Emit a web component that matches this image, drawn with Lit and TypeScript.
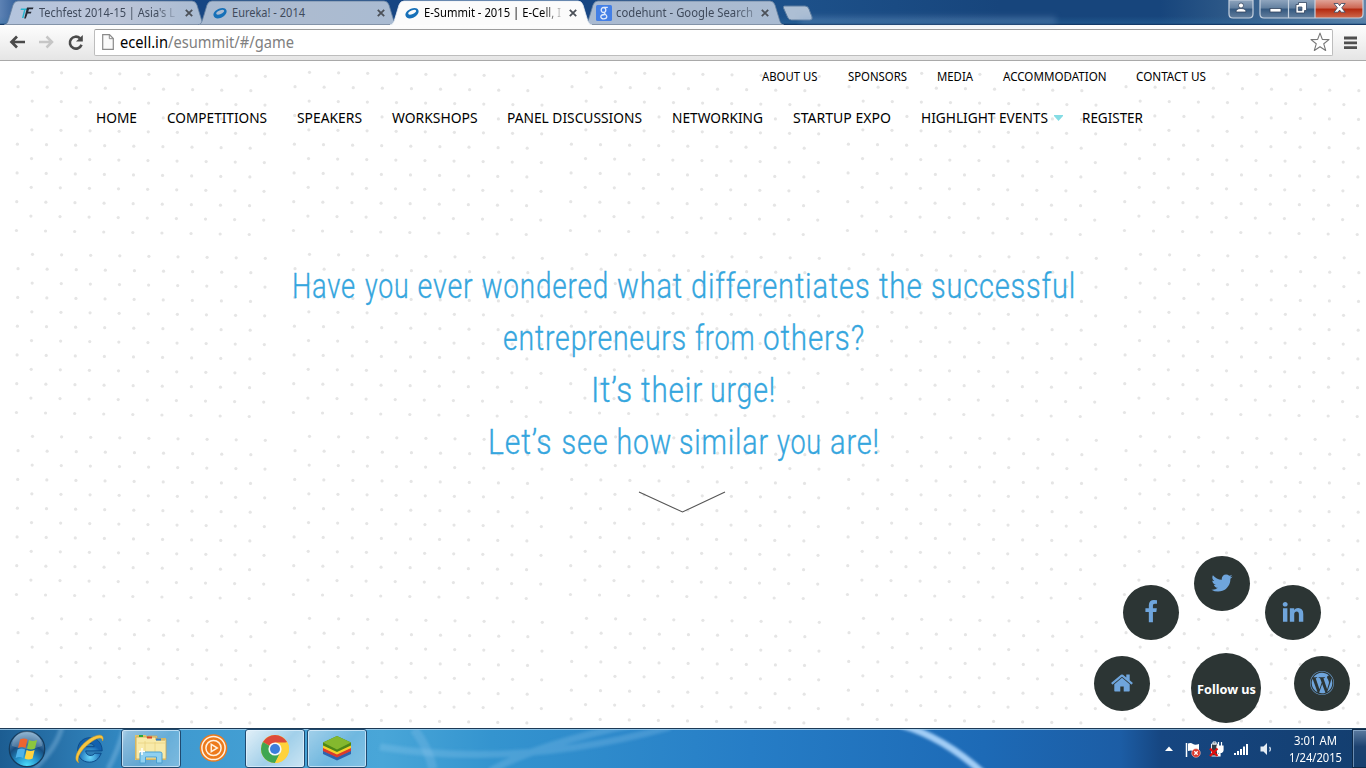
import { LitElement, html, svg, css } from "lit";
import { customElement } from "lit/decorators.js";

/** A line of text set to an exact advance width. */
const line = (
  text: string,
  width: number,
  size: number,
  height: number,
  base: number,
  cls = ""
) => html`<svg class="line ${cls}" width=${width} height=${height}>
  <text x="0" y=${base} font-size=${size} textLength=${width} lengthAdjust="spacingAndGlyphs">${text}</text>
</svg>`;

interface Tab { title: string; w: number; textW: number; icon: string; active?: boolean; pad: number; end: number; fade: string; }

const tabs: Tab[] = [
  { title: "Techfest 2014-15 | Asia's L", w: 202, textW: 136, icon: "tf", pad: 15, end: 13, fade: "fade" },
  { title: "Eureka! - 2014", w: 200, textW: 73, icon: "ring", pad: 14, end: 13, fade: "" },
  { title: "E-Summit - 2015 | E-Cell, I", w: 202, textW: 137, icon: "ring", active: true, pad: 14, end: 15, fade: "fade" },
  { title: "codehunt - Google Search", w: 200, textW: 137, icon: "goog", pad: 12, end: 15, fade: "fadeS" },
];

const topNav: [string, number][] = [
  ["ABOUT US", 55.5], ["SPONSORS", 59], ["MEDIA", 36], ["ACCOMMODATION", 103.5], ["CONTACT US", 70],
];
const mainNav: [string, number][] = [
  ["HOME", 41], ["COMPETITIONS", 100], ["SPEAKERS", 65], ["WORKSHOPS", 85.5], ["PANEL DISCUSSIONS", 135],
  ["NETWORKING", 91], ["STARTUP EXPO", 98], ["HIGHLIGHT EVENTS", 127], ["REGISTER", 61],
];

// Each headline line: total width, then its words as [text, offset, width].
const headline: { width: number; words: [string, number, number][] }[] = [
  { width: 783, words: [["Have", 0, 64], ["you", 73, 44.5], ["ever", 125.5, 56], ["wondered", 189.5, 127.5], ["what", 325, 66], ["differentiates", 399, 179.5], ["the", 587, 43.5], ["successful", 639, 145]] },
  { width: 361, words: [["entrepreneurs", 0, 184], ["from", 192, 60.5], ["others?", 260, 102]] },
  { width: 184, words: [["It’s", 0, 42], ["their", 50, 62], ["urge!", 119, 66] ] },
  { width: 391, words: [["Let’s", 0, 64.5], ["see", 73.5, 47], ["how", 128.5, 55.5], ["similar", 191, 90], ["you", 289, 45], ["are!", 342, 50]] },
];

const P = {
  twitter: "M1684 408q-67 98-162 167 1 14 1 42 0 130-38 259.5t-115.5 248.5-184.5 210.5-258 146-323 54.5q-271 0-496-145 35 4 78 4 225 0 401-138-105-2-188-64.5t-114-159.5q33 5 61 5 43 0 85-11-112-23-185.5-111.5t-73.5-205.5v-4q68 38 146 41-66-44-105-115t-39-154q0-88 44-163 121 149 294.5 238.5t371.5 99.5q-8-38-8-74 0-134 94.5-228.5t228.5-94.5q140 0 236 102 109-21 205-78-37 115-142 178 93-10 186-50z",
  facebook: "M1343 12v264h-157q-86 0-116 36t-30 108v189h293l-39 296h-254v759h-306v-759h-255v-296h255v-218q0-186 104-288.5t277-102.5q147 0 228 12z",
  linkedin: "M477 625v991h-330v-991h330zm21-306q1 73-50.5 122t-135.5 49h-2q-82 0-132-49t-50-122q0-74 51.5-122.5t134.5-48.5 133 48.5 51 122.5zm1166 729v568h-329v-530q0-105-40.5-164.5t-126.5-59.5q-63 0-105.5 34.5t-63.5 85.5q-11 30-11 81v553h-329q2-399 2-647t-1-296l-1-48h329v144h-2q20-32 41-56t56.5-52 87-43.5 114.5-15.5q171 0 275 113.5t104 332.5z",
  home: "M1472 992v480q0 26-19 45t-45 19h-384v-384h-256v384h-384q-26 0-45-19t-19-45v-480q0-1 .5-3t.5-3l575-474 575 474q1 2 1 6zm223-69l-62 74q-8 9-21 11h-3q-13 0-21-7l-692-577-692 577q-12 8-24 7-13-2-21-11l-62-74q-8-10-7-23.5t11-21.5l719-599q32-26 76-26t76 26l244 204v-195q0-14 9-23t23-9h192q14 0 23 9t9 23v408l219 182q10 8 11 21.5t-7 23.5z",
  wordpress: "M127 896q0-163 67-313l367 1005q-196-95-315-281t-119-411zm1288-39q0 19-2.5 38.5t-10 49.5-11.5 44-17.5 59-17.5 58l-76 256-278-826q46-3 88-8 19-2 26-18.5t-2.5-31-28.5-13.5l-205 10q-75-1-202-10-12-1-20.5 5t-11.5 15-1.5 18.5 9 16.5 19.5 8l80 8 120 328-168 504-280-832q46-3 88-8 19-2 26-18.5t-2.5-31-28.5-13.5l-205 10q-7 0-23-.5t-26-.5q105-160 274.5-253.5t367.5-93.5q147 0 280.5 53t238.5 149h-10q-55 0-92 40.5t-37 95.5q0 12 2 24t4 21.5 8 23 9 21 12 22.5 12.5 21 14.5 24 14 23q63 107 63 212zm-506 106l237 647q1 6 5 11-126 44-255 44-112 0-217-32zm661-436q95 174 95 369 0 209-104 385.5t-279 278.5l235-678q59-169 59-276 0-42-6-79zm-674-527q182 0 348 71t286 191 191 286 71 348-71 348-191 286-286 191-348 71-348-71-286-191-191-286-71-348 71-348 191-286 286-191 348-71zm0 1751q173 0 331.5-68t273-182.5 182.5-273 68-331.5-68-331.5-182.5-273-273-182.5-331.5-68-331.5 68-273 182.5-182.5 273-68 331.5 68 331.5 182.5 273 273 182.5 331.5 68z",
};

// The tile repeats every 277 x 182 px: twelve slightly rotated rows of nine dots.
const dots = Array.from({ length: 12 * 9 }, (_, i) => {
  const r = Math.floor(i / 9), c = i % 9;
  return svg`<circle cx=${(r % 2 ? 18.2 : 32.5) - r * 0.16 + c * 29.1} cy=${11.3 + r * 14.38 + c * 0.5} r="1.6"/>`;
});

@customElement("app-root")
export class AppRoot extends LitElement {
  static styles = css`
    :host { display: flex; flex-direction: column; width: 1366px; height: 768px; overflow: hidden; background: #fff; }
    :host, text { font-family: 'Noto Sans', 'Open Sans', sans-serif; }
    svg { display: block; flex: none; }
    .line { overflow: visible; }
    .titlebar { position: relative; display: flex; height: 25px; padding-left: 4px; box-sizing: border-box; flex: none;
      background: linear-gradient(180deg, transparent 65%, rgba(50,115,165,.35) 93%, #143a68 97%), linear-gradient(90deg, #5d82b4 0, #3a659d 15px, #174683 190px, #174683 600px, #1d518a 790px, #17457c 1000px, #17457c 1160px, #315c8a 1240px, #6486aa 1366px); }
    .glow { position: absolute; left: 800px; top: 17px; width: 256px; height: 7px; background: rgba(130,165,205,.33); filter: blur(3px); }
    .tab { position: relative; display: flex; height: 25px; align-items: center; margin-right: -8px; box-sizing: border-box; color: #3f4a5c; }
    .tab.active { z-index: 2; color: #000; }
    .tab > .shape { position: absolute; left: 0; top: 0; }
    .tab > .fav, .tab > .line, .tab > .x { position: relative; }
    .tab .line { margin-left: 4px; fill: currentColor; }
    .tab .fade { -webkit-mask-image: linear-gradient(90deg,#000 86%,rgba(0,0,0,.18) 100%); }
    .tab .fadeS { -webkit-mask-image: linear-gradient(90deg,#000 86%,rgba(0,0,0,.45) 100%); }
    .space { flex: 1; }
    .newtab { margin: 5px 0 0 6px; }
    .winbtns { position: absolute; left: 1228px; top: 0; }
    .toolbar { display: flex; align-items: center; height: 36px; box-sizing: border-box; flex: none; padding: 0 9px 1px 9px; background: linear-gradient(#fdfdfd, #f2f2f2 50%, #e5e5e5); border-bottom: 1px solid #a9a9a9; }
    .omni { display: flex; align-items: center; width: 1240px; height: 27px; box-sizing: border-box; margin-left: 8px; padding: 0 2px 0 7px; border: 1px solid #bdbdbd; border-top-color: #9c9c9c; border-radius: 2px; background: #fff; }
    .omni .url { margin-left: 6px; fill: #000; }
    .omni .path { fill: #808080; }
    .nav3 { margin-left: 10px; }
    .menu { margin-left: 11px; }
    .page { position: relative; flex: 1; display: flex; flex-direction: column; }
    .dots { position: absolute; inset: 0; fill: #e5e5e5; }
    .top, .main { position: relative; display: flex; gap: 30px; fill: #000; }
    .top { padding: 7px 0 0 762px; height: 18px; }
    .main { padding: 22px 0 0 95.5px; }
    .hl { display: flex; gap: 6px; margin-right: -11px; align-items: center; }
    .hero { position: relative; display: flex; flex-direction: column; align-items: center; padding-top: 131px; fill: #35a6de; }
    .hero text { font-family: Roboto, 'Open Sans', sans-serif; font-weight: 300; letter-spacing: 1px; stroke: #35a6de; stroke-width: .35px; }
    .chev { margin: 24px 2px 0 0; }
    .bubble { position: absolute; display: flex; align-items: center; justify-content: center; width: 56px; height: 55px; border-radius: 50%; background: #2c3534; fill: #6fa5dc; box-sizing: border-box; padding-bottom: 1px; }
    .tw { left: 1194px; top: 495px; }
    .fb { left: 1123px; top: 524px; }
    .li { left: 1264.5px; top: 524px; }
    .ho { left: 1094px; top: 595px; }
    .wp { left: 1294px; top: 595px; }
    .fo { left: 1191px; top: 592px; width: 70px; height: 70px; fill: #fff; padding: 2px 0 0; }
    .fo text { font-weight: 700; }
    .taskbar { position: relative; display: flex; flex: none; height: 40px; box-sizing: border-box; border-top: 1px solid #1d3a56; }
    .taskbar .wall { position: absolute; left: 0; top: 0; }
    .apps { position: relative; display: flex; align-items: center; padding-left: 5px; }
    .app { display: flex; align-items: center; justify-content: center; width: 60px; height: 39px; box-sizing: border-box; margin-right: 2px; }
    .app.start { width: 44px; margin-right: 10px; }
    .app.start + .app { margin-right: 4px; }
    .run { border: 1px solid #1f4a70; border-radius: 3px; box-shadow: inset 0 0 0 1px rgba(230,245,255,.65); background: linear-gradient(135deg, rgba(255,255,255,.5), rgba(255,255,255,.22) 55%, rgba(255,255,255,.32)); }
    .run.first { margin-left: -2px; }
    .run.cur { background: linear-gradient(135deg, rgba(255,255,255,.85), rgba(255,255,255,.5) 55%, rgba(255,255,255,.72)); }
    .tray { position: relative; display: flex; align-items: center; margin-left: auto; fill: #fff; }
    .clock { display: flex; flex-direction: column; align-items: center; width: 54px; margin: 2px 10px 0 12px; }
    .peek { width: 14px; height: 39px; box-sizing: border-box; border: 1px solid #0d2a4a; border-right: 0; box-shadow: inset 1px 1px 0 rgba(160,190,220,.6); background: linear-gradient(#5b7ba0, #1d4270 45%, #16406f); }
  `;

  favicon(kind: string) {
    if (kind === "tf") return html`<svg class="fav" width="16" height="16" viewBox="0 0 16 16"><path d="M2 3.500h7l-.6 1.500H6.500L4.500 13H3l2-8H1.500z" fill="#25b3cf"/><path d="M8.500 2.500h6l-.7 1.800H10l-.8 2.500h3.300l-.7 1.700H8.600L6.800 13.500H5.200L8 2.500z" fill="#252a35"/></svg>`;
    if (kind === "goog") return html`<svg class="fav" width="16" height="16" viewBox="0 0 16 16"><rect width="16" height="16" rx="1.500" fill="#437fe6"/><g fill="none" stroke="#dfe9fb" stroke-width="1.300"><ellipse cx="7.500" cy="5" rx="2.300" ry="2.500"/><path d="M8 2.400h3.800M9 7.500c-2 1 1.800 1.800 1.800 3.900 0 3.200-6 3.200-6 .4 0-1.800 2.200-2.300 4-2.300"/></g></svg>`;
    return html`<svg class="fav" width="16" height="16" viewBox="0 0 16 16"><g transform="rotate(-22 8 8)"><path fill-rule="evenodd" d="M1 8.500C1 5.500 4.500 3.700 8.500 3.700s6.500 1.600 6.500 4.100-3.500 5-7.700 5S1 11 1 8.500zM4.200 7.400c0 1.300 1.800 1.900 4.100 1.900s4.400-.8 4.400-2-2-1.800-4.200-1.800-4.300.7-4.300 1.900z" fill="#1670b8"/></g></svg>`;
  }

  tab(t: Tab, i: number) {
    const w = t.w, f = t.active ? "#fbfbfb" : "url(#tg" + i + ")";
    return html`<div class="tab ${t.active ? "active" : ""}" style="width:${w}px;padding-left:${t.pad}px;padding-right:${t.end}px">
      <svg class="shape" width=${w} height="25">
        <defs><linearGradient id="tg${i}"><stop offset="0" stop-color=${i ? "#a9bad1" : "#b3c4dd"}/><stop offset=".55" stop-color=${i ? "#acbbd0" : "#bcc5d8"}/><stop offset="1" stop-color="#a9bbd2"/></linearGradient></defs>
        <path d="M0 25C4 24 4 21 6 15L9 5Q10.500 1 14 1H${w - 14}Q${w - 10.5} 1 ${w - 9} 5L${w - 6} 15C${w - 4} 21 ${w - 4} 24 ${w} 25z" fill=${f} stroke=${t.active ? "#e6ecf3" : "#67819f"} stroke-width=".8"/>
        ${t.active ? svg`<rect y="24" x="3" width=${w - 6} height="2" fill="#fbfbfb"/>` : svg`<path d="M1 24.500H${w - 1}" stroke="#8393a8"/>`}
      </svg>
      ${this.favicon(t.icon)}
      ${line(t.title, t.textW, 12, 17, 13, t.fade)}
      <span class="space"></span>
      <svg class="x" width="8" height="8" viewBox="0 0 8 8"><path d="M.8.8l6.400 6.400M7.200.8L.8 7.200" stroke="#4b5058" stroke-width="1.800"/></svg>
    </div>`;
  }

  icon(d: string) {
    return html`<svg width="24" height="24" viewBox="0 0 1792 1792"><path d=${d}/></svg>`;
  }

  render() {
    return html`
      <div class="titlebar">
        <div class="glow"></div>
        ${tabs.map((t, i) => this.tab(t, i))}
        <svg class="newtab" width="32" height="16"><path d="M2.500 1H23q3 0 4 3l3 8q.8 3-2 3H9.500Q6.500 15 5.500 12L1.500 3Q1 1 2.500 1z" fill="#adbfd4" stroke="#5c7c9f"/></svg>
        <svg class="winbtns" width="138" height="20">
          <defs>
            <linearGradient id="wb" x2="0" y2="1"><stop offset="0" stop-color="#8fa5be"/><stop offset=".45" stop-color="#627f9f"/><stop offset=".5" stop-color="#34587f"/><stop offset="1" stop-color="#637f9e"/></linearGradient>
            <linearGradient id="wr" x2="0" y2="1"><stop offset="0" stop-color="#e0a397"/><stop offset=".45" stop-color="#cd6652"/><stop offset=".5" stop-color="#b3290f"/><stop offset="1" stop-color="#cf6a4d"/></linearGradient>
          </defs>
          <path d="M1 0V14Q1 18 5 18H21Q25 18 25 14V0z" fill="url(#wb)" stroke="#c5d1df" stroke-width="1.200"/>
          <path d="M32 0V14Q32 18 36 18H87V0z" fill="url(#wb)"/><path d="M87 0V18H131Q135 18 135 14V0z" fill="url(#wr)"/>
          <path d="M32 0V14Q32 18 36 18H131Q135 18 135 14V0M60.500 0V18M87 0V18" fill="none" stroke="#c5d1df" stroke-width="1.200"/>
          <g fill="#fff" stroke="#33455f" stroke-width=".8">
            <circle cx="13" cy="5.500" r="2.500"/><path d="M8 12Q8 8.500 13 8.500T18 12z"/>
            <rect x="42" y="8.500" width="11" height="3.500"/>
            <path fill-rule="evenodd" d="M70.500 2.500h8v8h-2v2.500h-8.500v-8.500h2.500zM70.300 7v3.600h3.600V7z"/>
            <path d="M106 3.500h4l1.600 2.200 1.600-2.200h4l-3.500 4.300 3.500 4.400h-4l-1.600-2.200-1.600 2.200h-4l3.500-4.400z"/>
          </g>
        </svg>
      </div>

      <div class="toolbar">
        <svg width="18" height="16" viewBox="0 0 18 16"><path d="M2.500 8H16M8 2.500L2.500 8 8 13.500" fill="none" stroke="#4a4a4a" stroke-width="2.700"/></svg>
        <svg class="nav3" width="18" height="16" viewBox="0 0 18 16"><path d="M2 8h13M9.500 2.500L15 8l-5.500 5.500" fill="none" stroke="#c6c6c6" stroke-width="2.500"/></svg>
        <svg class="nav3" width="21" height="18" viewBox="0 0 21 18"><path d="M16.500 11.200A6 6 0 1 1 15 4.800" transform="translate(0 .5)" fill="none" stroke="#4a4a4a" stroke-width="2.600"/><path d="M17.800 2v6.500H11z" fill="#4a4a4a"/></svg>
        <div class="omni">
          <svg width="12" height="16" viewBox="0 0 12 16"><path d="M.7.700H7.500L11.300 4.500V15.300H.7z" fill="#fafafa" stroke="#8a8a8a" stroke-width="1.200"/><path d="M7.300.700V4.700H11.300" fill="none" stroke="#8a8a8a"/></svg>
          <svg class="line url" width="174" height="22">
            <text x="0" y="17" font-size="16" textLength="174" lengthAdjust="spacingAndGlyphs">ecell.in<tspan class="path">/esummit/#/game</tspan></text>
          </svg>
          <span class="space"></span>
          <svg width="20" height="20" viewBox="0 0 18 18"><path d="M9 1l2.100 5.600 6 .3-4.700 3.700 1.700 6L9 13.200l-5.100 3.400 1.700-6L.9 6.900l6-.3z" fill="#fff" stroke="#777" stroke-width="1" stroke-linejoin="round"/></svg>
        </div>
        <svg class="menu" width="13" height="13"><path d="M0 2h13M0 6.800h13M0 11.600h13" stroke="#4f4f4f" stroke-width="2.800"/></svg>
      </div>

      <div class="page">
        <svg class="dots" width="1366" height="667">
          <defs><pattern id="tile" width="277" height="182" patternUnits="userSpaceOnUse">${dots}</pattern></defs>
          <rect width="1366" height="667" fill="url(#tile)"/>
        </svg>
        <div class="top">${topNav.map(([t, w]) => line(t, w, 12, 18, 13))}</div>
        <div class="main">
          ${mainNav.map(([t, w]) => t.startsWith("HIGH")
            ? html`<div class="hl">${line(t, w, 14, 20, 15)}<svg width="9" height="6"><path d="M0 0H9V1L4.500 6 0 1z" fill="#84dce4"/></svg></div>`
            : line(t, w, 14, 20, 15))}
        </div>
        <div class="hero">
          ${headline.map((l) => html`<svg class="line" width=${l.width} height="52">
            <text y="39" font-size="35">${l.words.map(([t, x, w]) => svg`<tspan x=${x} textLength=${w} lengthAdjust="spacingAndGlyphs">${t}</tspan>`)}</text>
          </svg>`)}
          <svg class="chev" width="88" height="23"><path d="M1 1L44.500 21 87 1" fill="none" stroke="#555" stroke-width="1.100"/></svg>
        </div>
        <div class="bubble tw">${this.icon(P.twitter)}</div>
        <div class="bubble fb">${this.icon(P.facebook)}</div>
        <div class="bubble li">${this.icon(P.linkedin)}</div>
        <div class="bubble ho">${this.icon(P.home)}</div>
        <div class="bubble wp">${this.icon(P.wordpress)}</div>
        <div class="bubble fo">${line("Follow us", 59, 13, 18, 14)}</div>
      </div>

      <div class="taskbar">
        <svg class="wall" width="1366" height="39">
          <defs>
            <linearGradient id="sky"><stop offset="0" stop-color="#1c5d92"/><stop offset=".05" stop-color="#2a76ae"/><stop offset=".085" stop-color="#3186bf"/><stop offset=".13" stop-color="#3f9ad0"/><stop offset=".28" stop-color="#49a6d8"/><stop offset=".36" stop-color="#3494cf"/><stop offset=".55" stop-color="#267dc6"/><stop offset=".72" stop-color="#1d6ab6"/><stop offset=".82" stop-color="#1c5da5"/><stop offset=".85" stop-color="#164681"/><stop offset="1" stop-color="#133e6f"/></linearGradient>
            <filter id="soft" x="-20%" y="-50%" width="140%" height="200%"><feGaussianBlur stdDeviation="1.800"/></filter>
          </defs>
          <rect width="1366" height="39" fill="url(#sky)"/>
          <g fill="none" stroke="#a9d4f5" filter="url(#soft)">
            <path d="M901-4Q943 8 983 44" stroke="#a2cdf6" stroke-width="7"/>
            <path d="M490 42Q540 14 640-6M380 18Q520 40 670-2" opacity=".22" stroke-width="7"/>
            <path d="M414 0Q428 18 433 40" opacity=".2" stroke-width="9"/>
            <path d="M34 40Q56 20 62-2M108 40Q118 22 124 0" opacity=".3" stroke-width="5"/>
          </g>
          <path d="M0 .5H1366" stroke="#a8d2ee" opacity=".75"/>
        </svg>
        <div class="apps">
          <div class="app start">
            <svg width="38" height="38" viewBox="0 0 38 38">
              <defs><radialGradient id="orb" cx=".5" cy="1" r=".95"><stop offset="0" stop-color="#4fe4ff"/><stop offset=".35" stop-color="#2593cc"/><stop offset=".65" stop-color="#174d80"/><stop offset="1" stop-color="#6e9dc3"/></radialGradient></defs>
              <circle cx="19" cy="19" r="17.700" fill="url(#orb)" stroke="#153c5e" stroke-width="1.300"/>
              <path d="M4 16A15 15 0 0 1 34 16Q19 22 4 16z" fill="#fff" opacity=".2"/>
              <path d="M12 9.500q3.800-2.200 7.500 0l-2 8.500q-3.500-2-7.500 0z" fill="#ee6530"/><path d="M21 10q3.800 2.200 8 0l-2 8.500q-4 2-8 0z" fill="#8cc63e"/>
              <path d="M9.600 19.500q3.800-2.200 7.500 0l-2 8.500q-3.500-2-7.500 0z" fill="#4eb2ea"/><path d="M18.600 20q3.800 2.200 8 0l-2 8.500q-4 2-8 0z" fill="#ffd340"/>
            </svg>
          </div>
          <div class="app">
            <svg width="32" height="32" viewBox="0 0 34 34"><defs><radialGradient id="ie" cx=".5" cy=".8"><stop offset="0" stop-color="#69d7fb"/><stop offset="1" stop-color="#1261ae"/></radialGradient></defs>
              <path fill-rule="evenodd" d="M5 18C5 10 11 5 18 5s13 5 13 14H13.500c.5 6 8 6 9.500 2.500h7C27.500 28 23 31 17.500 31 10 31 5 26 5 18zM13.500 14.500h9c-.5-4.500-8.500-4.500-9 0z" fill="url(#ie)" stroke="#0c4a88"/>
              <path d="M6 31.500C-1 29 5 14 18 6 27 .5 34 1 31.500 8.500 31 3.500 26 5 20 9 10 16 3 26 6 31.500z" fill="#f7c640" stroke="#d99e20" stroke-width=".6"/></svg>
          </div>
          <div class="app run first">
            <svg width="34" height="32" viewBox="0 0 34 32">
              <path d="M1 2h11l2 3h18v22H1z" fill="#e2c36b"/><path d="M2 4h12v-1h9v3h9v20H2z" fill="#f8eaa9" stroke="#c7a350" stroke-width=".8"/>
              <path d="M12 4h10v3h9" fill="none" stroke="#c7a350"/><rect x="5" y="2" width="4" height="2" fill="#2aa83a"/><rect x="13" y="3.500" width="5" height="2" fill="#d4422b"/><rect x="22" y="5.500" width="5" height="2" fill="#2b7fd4"/>
              <path d="M4 10h27M11 8v17M21 9v16" stroke="#e9d382" stroke-width=".8"/>
              <path d="M6 30V20.500Q6 19 8 19H26Q28 19 28 20.500V30H22.500V24H11.500V30z" fill="#8fd0f0" stroke="#4b9fd0"/><path d="M8 15v7M5 18.500h6" stroke="#fff" stroke-width="1.500"/>
            </svg>
          </div>
          <div class="app">
            <svg width="29" height="30" viewBox="0 0 29 30"><circle cx="14.500" cy="14" r="13.800" fill="#ed7a1b"/><g fill="none" stroke="#fff1df" stroke-width="1.500"><circle cx="14.500" cy="14" r="11.600"/><circle cx="14.500" cy="14" r="7.600"/><path d="M12.300 10.300v7.400l6-3.700z"/></g></svg>
          </div>
          <div class="app run cur">
            <svg width="30" height="30" viewBox="0 0 30 30"><circle cx="15" cy="15" r="14" fill="#ffcf3b"/><path d="M15 15L2.900 8A14 14 0 0 1 27.100 8z" fill="#dd4a3b"/><path d="M15 15L2.900 8A14 14 0 0 0 15 29L20.500 18z" fill="#3fa652"/><path d="M15 8.500H27.400A14 14 0 0 1 15 29L20.600 18z" fill="#ffd23c"/><circle cx="15" cy="15" r="6.600" fill="#f5f7fa"/><circle cx="15" cy="15" r="5" fill="#3b7ddb"/></svg>
          </div>
          <div class="app run">
            <svg width="30" height="28" viewBox="0 0 30 28"><path d="M1 15.500L15 22 29 15.500V19L15 25.500 1 19z" fill="#2f63ad"/><path d="M1 12.500L15 19 29 12.500V16L15 22.500 1 16z" fill="#dc3b2c"/><path d="M1 9.500L15 16 29 9.500V13L15 19.500 1 13z" fill="#f5d128"/><path d="M1 7.500L15 1 29 7.500V10.500L15 17 1 10.500z" fill="#4c8718"/><path d="M1 7.500L15 1 29 7.500 15 14.500z" fill="#84b82e"/></svg>
          </div>
        </div>
        <div class="tray">
          <svg width="112" height="20" viewBox="0 0 112 20">
            <path d="M1 12h8L5 7.500z"/>
            <path d="M22.500 4V18" stroke="#fff" stroke-width="1.500"/><path d="M24 4.500q3-1 5 .5t6 0v7q-3 1-5.500 0T24 12z"/>
            <circle cx="32" cy="14" r="4.300" fill="#da3529" stroke="#f5c7bf" stroke-width=".6"/><path d="M30.300 12.300l3.400 3.400M33.700 12.300l-3.400 3.400" stroke="#fff" stroke-width="1.300"/>
            <path d="M47.500 5h6v12h-6zM49 3h3v2h-3z" fill="#333c46" stroke="#e9eef4"/><path d="M53 7h6v4q0 2.500-3 2.500T53 11zM54.500 3v5M57.500 3v5M56 13v4h-4" fill="#fff" stroke="#fff" stroke-width="1.200"/>
            <path d="M46 9.500l7.500 7.500M53.500 9.500L46 17" stroke="#e20d0d" stroke-width="2.200"/>
            <path d="M70 14h2v2h-2zM73 12h2v4h-2zM76 10h2v6h-2zM79 7.500h2v8.500h-2zM82 5h2v11h-2z"/>
            <path d="M96.500 7.500h3L103 4v12l-3.500-3.500h-3z" fill="#e6edf4"/><path d="M105.500 8q1.800 2.200 0 4.500" fill="none" stroke="#d0deec" stroke-width="1.200"/>
          </svg>
          <div class="clock">${line("3:01 AM", 43, 12, 17, 12)}${line("1/24/2015", 53, 12, 17, 12)}</div>
          <div class="peek"></div>
        </div>
      </div>
    `;
  }
}
